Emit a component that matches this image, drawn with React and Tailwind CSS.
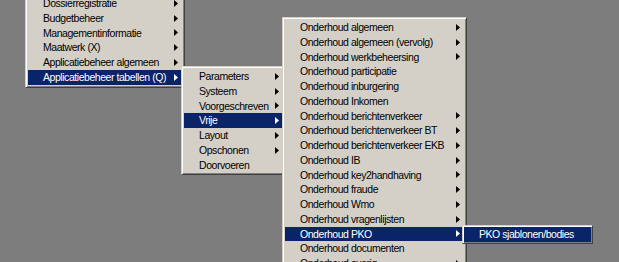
import React from 'react'

const Arrow = ({ active }) => (
  <svg width="4" height="7" viewBox="0 0 4 7" className="shrink-0">
    <polygon points="0,0 4,3.5 0,7" fill={active ? '#ffffff' : '#000000'} />
  </svg>
)

// classic win2000 raised menu frame
const Menu = ({ className, items, active }) => (
  <div
    className={`absolute bg-[#d4d0c8] border border-t-[#d4d0c8] border-l-[#d4d0c8] border-r-[#404040] border-b-[#404040] shadow-[inset_1px_1px_0_#ffffff,inset_-1px_-1px_0_#808080] ${className}`}
  >
    {items.map(([label, sub], i) => (
      <div
        key={label}
        className={`h-[14.75px] flex items-center justify-between pl-[15px] pr-[4px] ${
          i === active ? 'bg-[#0a246a] text-white' : 'text-black'
        }`}
      >
        <span className="whitespace-nowrap">{label}</span>
        {sub && <Arrow active={i === active} />}
      </div>
    ))}
  </div>
)

const mainMenu = [
  ['Dossierregistratie', true],
  ['Budgetbeheer', true],
  ['Managementinformatie', true],
  ['Maatwerk (X)', true],
  ['Applicatiebeheer algemeen', true],
  ['Applicatiebeheer tabellen (Q)', true],
]

const tabellen = [
  ['Parameters', true],
  ['Systeem', true],
  ['Voorgeschreven', true],
  ['Vrije', true],
  ['Layout', true],
  ['Opschonen', true],
  ['Doorvoeren', false],
]

const vrije = [
  ['Onderhoud algemeen', true],
  ['Onderhoud algemeen (vervolg)', true],
  ['Onderhoud werkbeheersing', true],
  ['Onderhoud participatie', false],
  ['Onderhoud inburgering', false],
  ['Onderhoud Inkomen', false],
  ['Onderhoud berichtenverkeer', true],
  ['Onderhoud berichtenverkeer BT', true],
  ['Onderhoud berichtenverkeer EKB', true],
  ['Onderhoud IB', true],
  ['Onderhoud key2handhaving', true],
  ['Onderhoud fraude', true],
  ['Onderhoud Wmo', true],
  ['Onderhoud vragenlijsten', true],
  ['Onderhoud PKO', true],
  ['Onderhoud documenten', false],
  ['Onderhoud overig', true],
]

export default function App() {
  return (
    <div className="relative w-[619px] h-[262px] overflow-hidden bg-[#7d7d7d] font-['Liberation_Sans',Arial,sans-serif] text-[10.5px] tracking-[-0.45px] leading-none">
      <Menu className="left-[25px] top-[-7px] w-[160px] p-[2px]" items={mainMenu} active={5} />
      <Menu className="left-[181px] top-[66px] w-[105px] p-[2px]" items={tabellen} active={3} />
      <Menu className="left-[282px] top-[17px] w-[185px] p-[2px]" items={vrije} active={14} />
      <Menu className="left-[462px] top-[225px] w-[131px] p-px" items={[['PKO sjablonen/bodies', false]]} active={0} />
    </div>
  )
}
